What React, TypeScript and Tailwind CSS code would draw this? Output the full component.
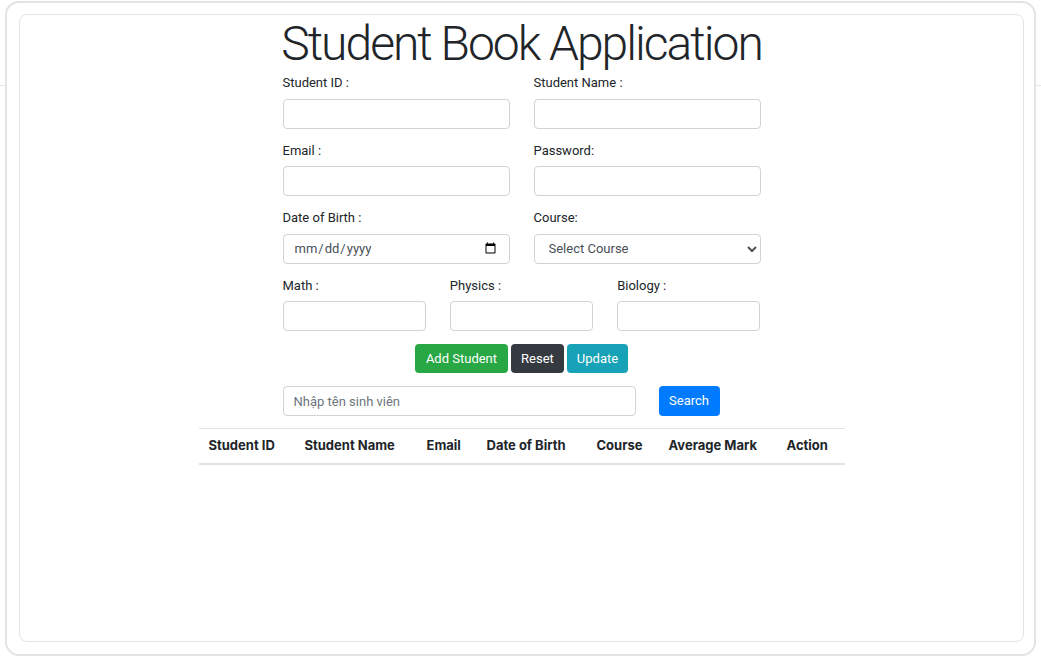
import { useState } from 'react';

const inputCls =
  "w-full h-[30px] rounded-[4px] border border-[#ced4da] bg-white px-[10px] text-[13px] text-[#495057] placeholder-[#6c757d] focus:outline-none";

function Field({ label, type = "text" }: { label: string; type?: string }) {
  return (
    <div className="flex flex-col">
      <label className="text-[13px] leading-[19.5px] text-[#212529] mb-[6px]">{label}</label>
      <input type={type} className={inputCls} />
    </div>
  );
}

export default function App() {
  const [course, setCourse] = useState("");
  const columns = [
    { name: "Student ID", w: "w-[106px] pl-[10px]" },
    { name: "Student Name", w: "w-[122px]" },
    { name: "Email", w: "w-[60px]" },
    { name: "Date of Birth", w: "w-[110px]" },
    { name: "Course", w: "w-[72px]" },
    { name: "Average Mark", w: "w-[118px]" },
    { name: "Action", w: "w-[58px]" },
  ];

  return (
    <main className="relative h-[658px] w-[1041px] bg-white font-['Roboto',sans-serif] text-[#212529]">
      {/* faint rule behind the frame */}
      <div className="absolute left-0 right-0 top-[84px] border-t border-[#e6e6e6]" />

      <div className="relative ml-[5px] mt-[1px] h-[655px] w-[1031px] rounded-[14px] border-2 border-[#e4e4e4] bg-white pt-[11px] pl-3 pr-[10px] pb-3">
        <div className="h-full rounded-[8px] border border-[#e3e3e3] bg-white">
          <div className="mx-auto w-[478px]">
            <h1 className="-mx-10 whitespace-nowrap text-center text-[48px] font-light leading-[58px] tracking-[-2px] text-[#212529]">
              Student Book Application
            </h1>

            {/* Form */}
            <div className="grid grid-cols-2 gap-x-6 gap-y-3">
              <Field label="Student ID :" />
              <Field label="Student Name :" />
              <Field label="Email :" type="email" />
              <Field label="Password:" type="password" />
              <Field label="Date of Birth :" type="date" />
              <div className="flex flex-col">
                <label className="text-[13px] leading-[19.5px] text-[#212529] mb-[6px]">Course:</label>
                <select
                  value={course}
                  onChange={(e) => setCourse(e.target.value)}
                  className="h-[30px] w-full rounded-[4px] border border-[#ced4da] bg-white pl-[10px] pr-[4px] text-[13px] text-[#495057]"
                >
                  <option value="">Select Course</option>
                  <option value="java">Java</option>
                  <option value="web">Web</option>
                </select>
              </div>
            </div>

            <div className="mt-3 grid grid-cols-3 gap-x-6">
              <Field label="Math :" />
              <Field label="Physics :" />
              <Field label="Biology :" />
            </div>

            {/* Buttons */}
            <div className="mt-[13px] flex justify-center gap-[3px]">
              <button className="h-[29px] rounded-[4px] bg-[#28a745] px-[11px] text-[13px] text-white">Add Student</button>
              <button className="h-[29px] rounded-[4px] bg-[#343a40] px-[10px] text-[13px] text-white">Reset</button>
              <button className="h-[29px] rounded-[4px] bg-[#17a2b8] px-[10px] text-[13px] text-white">Update</button>
            </div>

            {/* Search */}
            <div className="mt-[13px] flex items-center">
              <input type="text" placeholder="Nhập tên sinh viên" className={inputCls + " !w-[353px]"} />
              <button className="ml-[23px] h-[30px] w-[61px] rounded-[4px] bg-[#007bff] text-[13px] text-white">Search</button>
            </div>
          </div>

          {/* Table */}
          <table className="mx-auto mt-3 w-[646px] table-fixed border-collapse font-['Inter',sans-serif]">
            <thead>
              <tr className="border-t border-b-2 border-[#dee2e6]">
                {columns.map((c) => (
                  <th key={c.name} className={`${c.w} h-[35px] text-left text-[13px] font-bold text-[#212529]`}>
                    {c.name}
                  </th>
                ))}
              </tr>
            </thead>
            <tbody />
          </table>
        </div>
      </div>
    </main>
  );
}
